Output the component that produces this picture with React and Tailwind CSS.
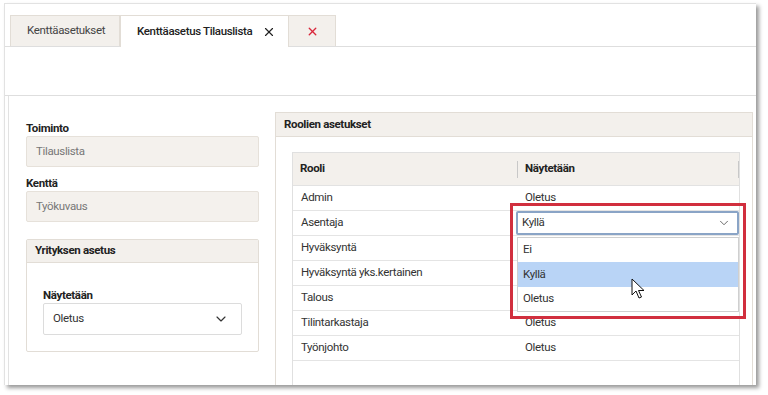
import { X, ChevronDown } from 'lucide-react';

const font = { fontFamily: 'Roboto, "Liberation Sans", sans-serif' };

const roles = [
  { name: 'Admin', value: 'Oletus' },
  { name: 'Asentaja', value: '' },
  { name: 'Hyväksyntä', value: '' },
  { name: 'Hyväksyntä yks.kertainen', value: '' },
  { name: 'Talous', value: '' },
  { name: 'Tilintarkastaja', value: 'Oletus' },
  { name: 'Työnjohto', value: 'Oletus' },
];

const Cursor = () => (
  <svg width="16" height="22" viewBox="0 0 16 22" className="absolute left-[338px] top-[125px]">
    <path d="M1 1 L1 17 L5 13 L8 20 L10.5 19 L7.5 12.5 L13 12.5 Z" fill="#fff" stroke="#111" strokeWidth="1" strokeLinejoin="round" />
  </svg>
);

const ReadonlyField = ({ label, value }) => (
  <div>
    <div className="h-[16px] leading-[16px] text-[11.5px] font-bold text-[#222]">{label}</div>
    <div className="h-[31px] border border-[#e6e1da] bg-[#f4f1ed] rounded-[2px] pl-[9px] flex items-center text-[11.5px] text-[#777]">
      {value}
    </div>
  </div>
);

export default function App() {
  return (
    <div className="w-[768px] h-[395px] bg-white overflow-hidden tracking-[-0.35px]" style={font}>
      <div className="ml-[4px] mt-[3px] w-[752px] h-[382px] bg-white border-t border-l border-[#e2e2e2] shadow-[3px_3px_4px_rgba(0,0,0,0.4)] flex flex-col">
        {/* Tabs */}
        <div className="flex items-end pl-[5px] pt-[11px] border-b border-[#dedede]">
          <div className="w-[110px] h-[31px] bg-[#f3f0ec] border border-b-0 border-[#e2ddd6] flex items-center pl-[16px] text-[11.5px] text-[#444]">
            Kenttäasetukset
          </div>
          <div className="w-[169px] h-[32px] -mb-px bg-white border border-b-0 border-[#e2ddd6] flex items-center pl-[16px] gap-[10px] text-[11.5px] font-medium text-[#222]">
            <span className="whitespace-nowrap">Kenttäasetus Tilauslista</span>
            <X size={14} strokeWidth={2} className="text-[#222] shrink-0" />
          </div>
          <div className="w-[47px] h-[31px] bg-[#f3f0ec] border border-b-0 border-l-0 border-[#e2ddd6] flex items-center justify-center">
            <X size={13} strokeWidth={2.5} className="text-[#d9273b]" />
          </div>
        </div>

        {/* Toolbar */}
        <div className="h-[49px] border-b border-[#dedede]" />

        {/* Content */}
        <div className="flex flex-1 min-h-0 pl-[3px]">
          <div className="w-[259px] border-l border-[#e2e2e2] pl-[17px] pr-[8px] pt-[24px] flex flex-col gap-[8px]">
            <ReadonlyField label="Toiminto" value="Tilauslista" />
            <ReadonlyField label="Kenttä" value="Työkuvaus" />
            <div className="mt-[9px] h-[113px] border border-[#e2ddd6] rounded-[2px]">
              <div className="h-[23px] bg-[#f3f0ec] border-b border-[#e2ddd6] flex items-center pl-[8px] text-[11.5px] font-bold text-[#222]">
                Yrityksen asetus
              </div>
              <div className="px-[16px] pt-[24px]">
                <div className="h-[16px] leading-[16px] text-[11.5px] font-bold text-[#222]">Näytetään</div>
                <div className="h-[32px] border border-[#dcdcdc] rounded-[2px] bg-white flex items-center justify-between pl-[9px] pr-[12px] text-[11.5px] text-[#333]">
                  <span>Oletus</span>
                  <ChevronDown size={16} strokeWidth={1.75} className="text-[#333]" />
                </div>
              </div>
            </div>
          </div>

          <div className="ml-[8px] mt-[16px] w-[478px] border border-b-0 border-[#e2ddd6] flex flex-col">
            <div className="h-[24px] bg-[#f3f0ec] border-b border-[#e2ddd6] flex items-center pl-[8px] text-[11.5px] font-bold text-[#222]">
              Roolien asetukset
            </div>
            <div className="flex-1 pl-[16px] pr-[12px] pt-[15px]">
              <div className="relative h-full border border-b-0 border-[#e0e0e0]">
                <div className="h-[33px] bg-[#f3f0ec] border-b border-[#e2e2e2] flex items-center text-[11.5px] font-bold text-[#222]">
                  <div className="w-[224px] pl-[7px]">Rooli</div>
                  <div className="w-px h-[17px] bg-[#c8c8c8]" />
                  <div className="flex-1 pl-[7px]">Näytetään</div>
                  <div className="w-px h-[17px] bg-[#c8c8c8]" />
                </div>
                {roles.map((r) => (
                  <div key={r.name} className="h-[25px] border-b border-[#e4e4e4] flex items-center text-[11.5px] text-[#333]">
                    <div className="w-[224px] pl-[8px]">{r.name}</div>
                    <div className="pl-[8px]">{r.value}</div>
                  </div>
                ))}

                {/* Highlight frame */}
                <div className="absolute left-[217px] top-[50px] w-[236px] h-[116px] border-[3px] border-[#d12f3e]" />

                {/* Open select */}
                <div className="absolute left-[223px] top-[58px] w-[223px] h-[24px] bg-white border-2 border-[#8aa4c6] rounded-[2px] flex items-center justify-between pl-[4px] pr-[6px] text-[11.5px] text-[#333]">
                  <span>Kyllä</span>
                  <ChevronDown size={14} strokeWidth={1.5} className="text-[#555]" />
                </div>
                <div className="absolute left-[224px] top-[84px] w-[222px] h-[75px] bg-white border border-[#cfcfcf] flex flex-col text-[11.5px] text-[#333]">
                  <div className="h-[24px] flex items-center pl-[5px]">Ei</div>
                  <div className="h-[25px] flex items-center pl-[5px] bg-[#b9d4f6]">Kyllä</div>
                  <div className="h-[24px] flex items-center pl-[5px]">Oletus</div>
                </div>
                <Cursor />
              </div>
            </div>
          </div>
        </div>
      </div>
    </div>
  );
}
